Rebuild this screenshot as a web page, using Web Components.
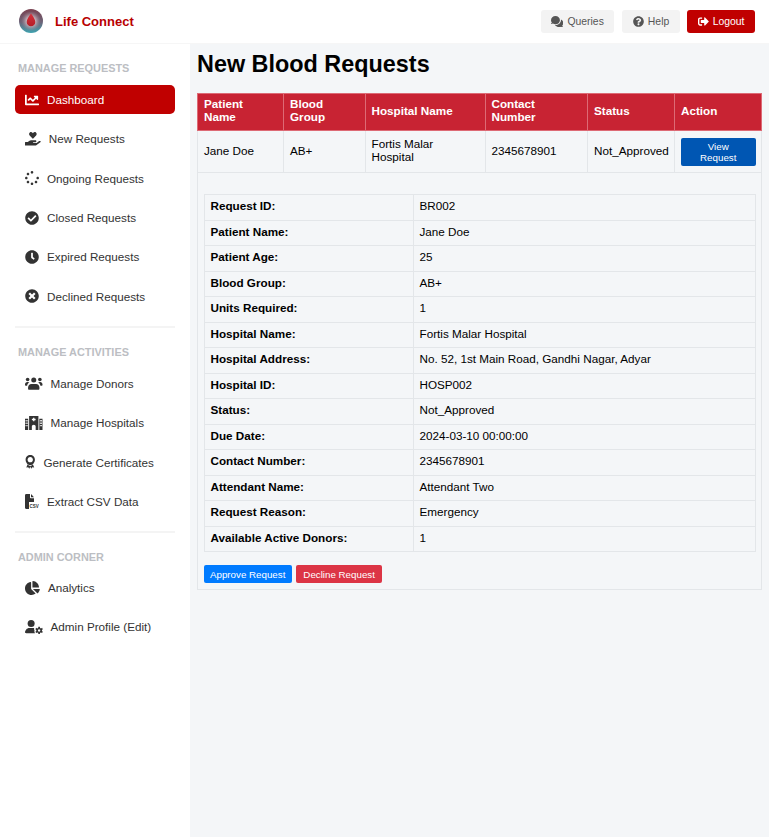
<!DOCTYPE html>
<html lang="en">
<head>
<meta charset="utf-8">
<title>Life Connect</title>
<style>
html,body{margin:0;height:100%;}
body{font-family:"Liberation Sans",Arial,sans-serif;background:#f4f6f8;color:#000;}
</style>
</head>
<body>
<admin-page>
    <top-bar slot="top"></top-bar>
    <side-bar slot="side">
        <nav-group heading="Manage Requests">
            <nav-item icon="chart" active>Dashboard</nav-item>
            <nav-item icon="hand">New Requests</nav-item>
            <nav-item icon="spinner">Ongoing Requests</nav-item>
            <nav-item icon="check">Closed Requests</nav-item>
            <nav-item icon="clock">Expired Requests</nav-item>
            <nav-item icon="times">Declined Requests</nav-item>
        </nav-group>
        <nav-group heading="Manage Activities">
            <nav-item icon="users">Manage Donors</nav-item>
            <nav-item icon="hospital">Manage Hospitals</nav-item>
            <nav-item icon="award">Generate Certificates</nav-item>
            <nav-item icon="csv">Extract CSV Data</nav-item>
        </nav-group>
        <nav-group heading="Admin Corner">
            <nav-item icon="pie">Analytics</nav-item>
            <nav-item icon="usercog">Admin Profile (Edit)</nav-item>
        </nav-group>
    </side-bar>
    <request-panel></request-panel>
</admin-page>

<script>
// icons, viewBox first then the shapes
const ICONS={
    chart:['0 0 512 512','<path d="M496 384H64V80c0-8.84-7.16-16-16-16H16C7.16 64 0 71.16 0 80v336c0 17.67 14.33 32 32 32h464c8.84 0 16-7.16 16-16v-32c0-8.84-7.16-16-16-16zM464 96H345.94c-21.38 0-32.09 25.85-16.97 40.97l32.4 32.4L288 242.75l-73.37-73.37c-12.5-12.5-32.76-12.5-45.25 0l-68.69 68.69c-6.25 6.25-6.25 16.38 0 22.63l22.62 22.62c6.25 6.25 16.38 6.25 22.63 0L192 237.25l73.37 73.37c12.5 12.5 32.76 12.5 45.25 0l96-96 32.4 32.4c15.12 15.12 40.97 4.41 40.97-16.97V112c.01-8.84-7.15-16-15.99-16z"/>'],
    hand:['0 0 576 512','<path d="M275 238L170 130c-30-31-28-82 5-110 29-24 72-20 98 7l15 15 15-15c26-27 69-31 98-7 33 28 35 79 5 110L301 238c-7 7-19 7-26 0z"/><path d="M568 340c-12-16-34-19-50-7l-94 70H304c-9 0-16-7-16-16s7-16 16-16h78c16 0 31-11 33-27 3-20-12-38-32-38H224c-27 0-53 9-74 26l-47 38H16c-9 0-16 7-16 16v96c0 9 7 16 16 16h357c15 0 29-5 41-14l147-108c16-12 19-34 7-51z"/>'],
    spinner:['0 0 512 512','<path d="M304 48c0 26.51-21.49 48-48 48s-48-21.49-48-48 21.49-48 48-48 48 21.49 48 48zm-48 368c-26.51 0-48 21.49-48 48s21.49 48 48 48 48-21.49 48-48-21.49-48-48-48zm208-208c-26.51 0-48 21.49-48 48s21.49 48 48 48 48-21.49 48-48-21.49-48-48-48zM96 256c0-26.51-21.49-48-48-48S0 229.49 0 256s21.49 48 48 48 48-21.49 48-48zm12.92 99.08c-26.51 0-48 21.49-48 48s21.49 48 48 48 48-21.49 48-48c0-26.5-21.5-48-48-48zm294.16 0c-26.51 0-48 21.49-48 48s21.49 48 48 48 48-21.49 48-48c0-26.5-21.49-48-48-48zM108.92 60.92c-26.51 0-48 21.49-48 48s21.49 48 48 48 48-21.49 48-48-21.5-48-48-48z"/>'],
    check:['0 0 512 512','<path d="M504 256c0 136.967-111.033 248-248 248S8 392.967 8 256 119.033 8 256 8s248 111.033 248 248zM227.314 387.314l184-184c6.248-6.248 6.248-16.379 0-22.627l-22.627-22.627c-6.248-6.249-16.379-6.249-22.628 0L216 308.118l-70.059-70.059c-6.248-6.248-16.379-6.248-22.628 0l-22.627 22.627c-6.248 6.248-6.248 16.379 0 22.627l104 104c6.249 6.249 16.379 6.249 22.628.001z"/>'],
    clock:['0 0 512 512','<path d="M256,8C119,8,8,119,8,256S119,504,256,504,504,393,504,256,393,8,256,8Zm92.49,313h0l-20,25a16,16,0,0,1-22.49,2.5h0l-67-49.72a40,40,0,0,1-15-31.23V112a16,16,0,0,1,16-16h32a16,16,0,0,1,16,16V256l58,42.5A16,16,0,0,1,348.49,321Z"/>'],
    times:['0 0 512 512','<path d="M256 8C119 8 8 119 8 256s111 248 248 248 248-111 248-248S393 8 256 8zm121.6 313.1c4.7 4.7 4.7 12.3 0 17L338 377.6c-4.7 4.7-12.3 4.7-17 0L256 312l-65.1 65.6c-4.7 4.7-12.3 4.7-17 0L134.4 338c-4.7-4.7-4.7-12.3 0-17l65.6-65-65.6-65.1c-4.7-4.7-4.7-12.3 0-17l39.6-39.6c4.7-4.7 12.3-4.7 17 0l65 65.7 65.1-65.6c4.7-4.7 12.3-4.7 17 0l39.6 39.6c4.7 4.7 4.7 12.3 0 17L312 256l65.6 65.1z"/>'],
    users:['0 0 640 512','<circle cx="96" cy="130" r="66"/><circle cx="544" cy="130" r="66"/><circle cx="320" cy="150" r="92"/><path d="M0 310c0-50 36-90 84-90h24c20 0 38 8 52 20-46 26-76 68-84 120H28c-16 0-28-14-28-30z"/><path d="M640 310c0-50-36-90-84-90h-24c-20 0-38 8-52 20 46 26 76 68 84 120h48c16 0 28-14 28-30z"/><path d="M112 430c0-74 52-134 120-134h176c68 0 120 60 120 134v34c0 20-16 36-36 36H148c-20 0-36-16-36-36z"/>'],
    hospital:['0 0 640 512','<path d="M0 96h116v416H0z M22 150v48h30v-48z M64 150v48h30v-48z M22 240v48h30v-48z M64 240v48h30v-48z M22 330v48h30v-48z M64 330v48h30v-48z" fill-rule="evenodd"/><path d="M524 96h116v416H524z M546 150v48h30v-48z M588 150v48h30v-48z M546 240v48h30v-48z M588 240v48h30v-48z M546 330v48h30v-48z M588 330v48h30v-48z" fill-rule="evenodd"/><path d="M150 0h340v512H390V380c0-34-32-60-70-60s-70 26-70 60v132H150z M296 60v44h-44v48h44v44h48v-44h44v-48h-44V60z" fill-rule="evenodd"/>'],
    award:['0 0 384 512','<path d="M97 340l-50 120 70-10 42 52 40-96c-40-6-74-30-102-66zM287 340c-28 36-62 60-102 66l40 96 42-52 70 10z"/><path d="M192 0C98 0 22 76 22 170s76 200 170 200 170-106 170-200S286 0 192 0zm0 268c-54 0-98-44-98-98s44-98 98-98 98 44 98 98-44 98-98 98z"/>'],
    pie:['0 0 544 512','<path d="M527.79 288H290.5l158.03 158.03c6.04 6.04 15.98 6.53 22.19.68 38.7-36.46 65.32-85.61 73.13-140.86 1.34-9.46-6.51-17.85-16.06-17.85zm-15.83-64.8C503.72 103.74 408.26 8.28 288.8.04 279.68-.59 272 7.1 272 16.24V240h223.77c9.14 0 16.82-7.68 16.19-16.8zM224 288V50.71c0-9.55-8.39-17.4-17.84-16.06C86.99 51.49-4.1 155.6.14 280.37 4.5 408.51 114.83 513.59 243.03 511.98c50.4-.63 96.97-16.87 135.26-44.03 7.9-5.6 8.42-17.23 1.57-24.08L224 288z"/>'],
    usercog:['0 0 640 512','<circle cx="224" cy="128" r="128"/><path d="M0 464c0-96 70-176 160-176h128c16 0 32 2 46 8-8 30-2 64 14 90-12 32-6 66 16 94H48c-26 0-48-16-48-16z"/><path fill-rule="evenodd" d="M488 250h56l8 42 34 16 38-22 28 48-32 28v38l32 28-28 48-38-22-34 16-8 42h-56l-8-42-34-16-38 22-28-48 32-28v-38l-32-28 28-48 38 22 34-16zM516 338a44 44 0 1 0 .1 0z"/>'],
    comments:['0 0 576 512','<path d="M416 192C416 86 323 0 208 0S0 86 0 192c0 41 14 79 38 110-14 30-34 52-35 53-3 3-4 8-2 12s6 6 10 6c32 0 58-11 78-22 36 19 76 31 119 31 115 0 208-86 208-190z"/><path d="M576 320c0-67-47-125-114-152 2 8 2 16 2 24 0 124-122 222-256 222-10 0-20 0-30-2 32 62 108 106 190 106 36 0 70-8 100-22 22 12 50 22 80 22 4 0 8-2 10-6s1-9-2-12c-1-1-20-22-34-52 34-34 54-80 54-128z"/>'],
    question:['0 0 512 512','<path d="M504 256c0 136.997-111.043 248-248 248S8 392.997 8 256C8 119.083 119.043 8 256 8s248 111.083 248 248zM262.655 90c-54.497 0-89.255 22.957-116.549 63.758-3.536 5.286-2.353 12.415 2.715 16.258l34.699 26.31c5.205 3.947 12.621 3.008 16.665-2.122 17.864-22.658 30.113-35.797 57.303-35.797 20.429 0 45.698 13.148 45.698 32.958 0 14.976-12.363 22.667-32.534 33.976C247.128 238.528 216 254.941 216 296v4c0 6.627 5.373 12 12 12h56c6.627 0 12-5.373 12-12v-1.333c0-28.462 83.186-29.647 83.186-106.667 0-58.002-60.165-102-116.531-102zM256 338c-25.365 0-46 20.635-46 46 0 25.364 20.635 46 46 46s46-20.636 46-46c0-25.365-20.635-46-46-46z"/>'],
    logout:['0 0 512 512','<path d="M497 273L329 441c-15 15-41 4.500-41-17v-96H152c-13.300 0-24-10.700-24-24v-96c0-13.300 10.700-24 24-24h136V88c0-21.400 25.900-32 41-17l168 168c9.300 9.400 9.300 24.600 0 34z"/><path d="M192 436v-40c0-6.600-5.400-12-12-12H96c-17.700 0-32-14.300-32-32V160c0-17.700 14.300-32 32-32h84c6.600 0 12-5.400 12-12V76c0-6.600-5.400-12-12-12H96c-53 0-96 43-96 96v192c0 53 43 96 96 96h84c6.600 0 12-5.400 12-12z"/>']
};

function iconSvg(name,size){
    const [box,shapes]=ICONS[name];
    const parts=box.split(' ');
    const width=size*parts[2]/parts[3];
    return `<svg viewBox="${box}" width="${width}" height="${size}" fill="currentColor" aria-hidden="true">${shapes}</svg>`;
}

class AdminPage extends HTMLElement{
    constructor(){
        super();
        this.attachShadow({mode:'open'});
        this.shadowRoot.innerHTML=`
            <style>
            :host{display:grid;grid-template-columns:190px 1fr;grid-template-rows:44px 1fr;height:837px;overflow:hidden;}
            ::slotted(top-bar){grid-column:1 / 3;}
            </style>
            <slot name="top"></slot>
            <slot name="side"></slot>
            <slot></slot>`;
    }
}
customElements.define('admin-page',AdminPage);

class TopBar extends HTMLElement{
    constructor(){
        super();
        this.attachShadow({mode:'open'});
        this.shadowRoot.innerHTML=`
            <style>
            :host{display:flex;align-items:center;background:#fff;padding:0 14px 1px 19px;box-sizing:border-box;border-bottom:1px solid #f6f6f6;}
            .brand{display:flex;align-items:center;gap:12px;flex:1;font-size:13px;font-weight:700;color:#b80000;}
            .btn{display:flex;align-items:center;gap:4px;height:23px;box-sizing:border-box;padding:0 10.5px;margin-left:8px;border-radius:3px;background:#f3f3f3;color:#555;font-size:10.4px;}
            .btn svg{flex:none;}
            .out{background:#c00000;color:#fff;margin-left:7.5px;}
            </style>
            <div class="brand">
                <svg width="24" height="24" viewBox="0 0 24 24" aria-hidden="true">
                    <defs>
                        <linearGradient id="ring" x1="0" y1="0" x2="0" y2="1">
                            <stop offset="0" stop-color="#7a4150"/>
                            <stop offset=".55" stop-color="#6c6478"/>
                            <stop offset="1" stop-color="#3fa3b0"/>
                        </linearGradient>
                        <radialGradient id="glow">
                            <stop offset=".35" stop-color="#d8c8cc"/>
                            <stop offset="1" stop-color="#a08090" stop-opacity="0"/>
                        </radialGradient>
                        <linearGradient id="drop" x1="0" y1="0" x2="0" y2="1">
                            <stop offset="0" stop-color="#d5323c"/>
                            <stop offset="1" stop-color="#b51d28"/>
                        </linearGradient>
                    </defs>
                    <circle cx="12" cy="12" r="12" fill="url(#ring)"/>
                    <circle cx="12" cy="12" r="10" fill="url(#glow)"/>
                    <path d="M12 4.500c2.300 3.300 4.300 5.800 4.300 8.400a4.300 4.300 0 0 1-8.600 0C7.700 10.300 9.700 7.800 12 4.500z" fill="url(#drop)"/>
                </svg>
                <span>Life Connect</span>
            </div>
            <div class="btn">${iconSvg('comments',11)}<span>Queries</span></div>
            <div class="btn">${iconSvg('question',11)}<span>Help</span></div>
            <div class="btn out">${iconSvg('logout',11)}<span>Logout</span></div>`;
    }
}
customElements.define('top-bar',TopBar);

class SideBar extends HTMLElement{
    constructor(){
        super();
        this.attachShadow({mode:'open'});
        this.shadowRoot.innerHTML=`
            <style>
            :host{display:block;background:#fff;padding:18px 15px 0;box-sizing:border-box;}
            </style>
            <slot></slot>`;
    }
}
customElements.define('side-bar',SideBar);

class NavGroup extends HTMLElement{
    constructor(){
        super();
        this.attachShadow({mode:'open'});
        this.shadowRoot.innerHTML=`
            <style>
            :host{display:block;border-bottom:2px solid #f4f4f4;margin-bottom:18px;padding-bottom:5px;}
            :host(:last-child){border-bottom:0;}
            h2{margin:0 0 10px 3px;font-size:10.900px;line-height:13px;font-weight:700;text-transform:uppercase;color:#bcbec3;}
            :host(:last-child) h2{margin-bottom:9px;}
            </style>
            <h2></h2>
            <slot></slot>`;
    }
    connectedCallback(){
        this.shadowRoot.querySelector('h2').textContent=this.getAttribute('heading');
    }
}
customElements.define('nav-group',NavGroup);

class NavItem extends HTMLElement{
    constructor(){
        super();
        this.attachShadow({mode:'open'});
        this.shadowRoot.innerHTML=`
            <style>
            :host{display:flex;align-items:center;gap:8px;height:29.300px;margin-bottom:10px;padding:0 10px;border-radius:5px;font-size:11.700px;color:#333;}
            :host([active]){background:#c00000;color:#fff;}
            svg{flex:none;}
            </style>
            <span id="icon" style="display:contents"></span>
            <slot></slot>`;
    }
    connectedCallback(){
        this.shadowRoot.getElementById('icon').innerHTML=this.iconMarkup();
    }
    iconMarkup(){
        const name=this.getAttribute('icon');
        if(name==='csv'){
            // file shape with the small CSV letters kept as real text
            return `<svg width="14" height="15" viewBox="0 0 14 15" fill="currentColor" aria-hidden="true">
                <path d="M0 1.500C0 .700.500 0 1.200 0H5v3.500c0 .500.300.800.800.800H9V8H4v7H1.200C.500 15 0 14.500 0 13.800z"/><path d="M6 0l3 3.200H6z"/>
                <text x="4.500" y="14" font-size="4.500" font-family="Liberation Sans" font-weight="700">CSV</text></svg>`;
        }
        return iconSvg(name,14);
    }
}
customElements.define('nav-item',NavItem);

class RequestPanel extends HTMLElement{
    constructor(){
        super();
        this.attachShadow({mode:'open'});
        const details=[
            ['Request ID:','BR002'],['Patient Name:','Jane Doe'],['Patient Age:','25'],['Blood Group:','AB+'],
            ['Units Required:','1'],['Hospital Name:','Fortis Malar Hospital'],
            ['Hospital Address:','No. 52, 1st Main Road, Gandhi Nagar, Adyar'],['Hospital ID:','HOSP002'],
            ['Status:','Not_Approved'],['Due Date:','2024-03-10 00:00:00'],['Contact Number:','2345678901'],
            ['Attendant Name:','Attendant Two'],['Request Reason:','Emergency'],['Available Active Donors:','1']
        ];
        const rows=details.map(d=>`<tr><th>${d[0]}</th><td>${d[1]}</td></tr>`).join('');
        this.shadowRoot.innerHTML=`
            <style>
            :host{display:block;padding:0 7px;font-size:11.700px;line-height:13px;color:#000;}
            h1{margin:0;padding-top:6px;height:43px;font-size:23.400px;line-height:28px;font-weight:700;}
            table{border-collapse:collapse;width:100%;table-layout:fixed;}
            .main>thead th{background:#c82333;color:#fff;font-weight:700;text-align:left;padding:0 6px 4px;height:32px;border:1px solid #dd6a75;}
            .main>tbody>tr>td{padding:0 6px;border:1px solid #e3e6e9;}
            .main>tbody>.first>td{height:38px;padding-bottom:3px;}
            .main>tbody>.first>td:last-child{height:41px;padding:0 5px 0 5.500px;}
            .btn-view{display:block;width:100%;height:28px;box-sizing:border-box;border:0;border-radius:2px;background:#0056b3;color:#fff;font:9.750px/11px "Liberation Sans",Arial,sans-serif;padding:0 10px;}
            .main>tbody>tr>td.open{padding:21px 5.500px 6px;}
            .info th,.info td{box-sizing:border-box;height:25.500px;padding:0 6px 3px;border:1px solid #e3e6e9;text-align:left;}
            .info th{width:209px;font-weight:700;}
            .actions{display:flex;gap:4px;margin-top:13px;}
            .actions button{height:18px;border:0;border-radius:2px;color:#fff;font:9.750px "Liberation Sans",Arial,sans-serif;}
            .yes{background:#007bff;padding:0 6.500px;}
            .no{background:#dc3545;padding:0 7.500px;}
            </style>
            <h1>New Blood Requests</h1>
            <table class="main">
                <colgroup><col style="width:86px"><col style="width:81.500px"><col style="width:120px"><col style="width:102.500px"><col style="width:87px"><col></colgroup>
                <thead>
                    <tr><th>Patient Name</th><th>Blood Group</th><th>Hospital Name</th><th>Contact Number</th><th>Status</th><th>Action</th></tr>
                </thead>
                <tbody>
                    <tr class="first"><td>Jane Doe</td><td>AB+</td><td>Fortis Malar Hospital</td><td>2345678901</td><td>Not_Approved</td><td><button class="btn-view">View Request</button></td></tr>
                    <tr><td class="open" colspan="6">
                        <table class="info"><tbody>${rows}</tbody></table>
                        <div class="actions"><button class="yes">Approve Request</button><button class="no">Decline Request</button></div>
                    </td></tr>
                </tbody>
            </table>`;
    }
}
customElements.define('request-panel',RequestPanel);
</script>
</body>
</html>
